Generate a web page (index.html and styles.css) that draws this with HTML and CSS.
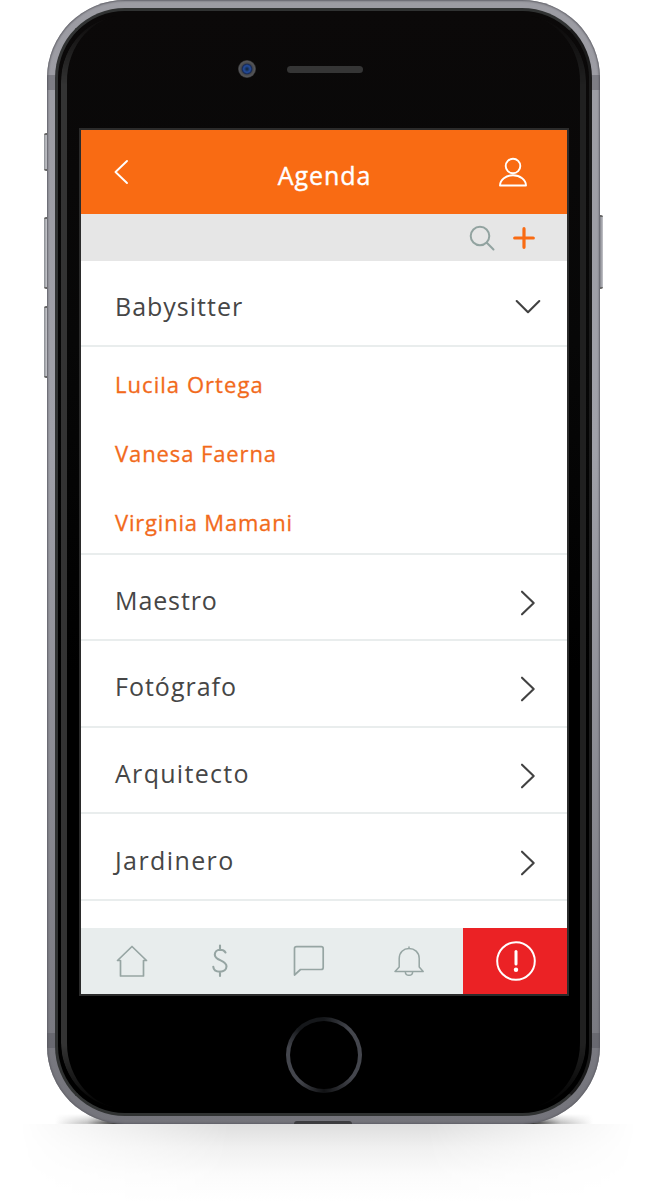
FILE: index.html
```html
<!DOCTYPE html>
<html lang="es">
<head>
<meta charset="utf-8">
<title>Agenda</title>
<link rel="stylesheet" href="styles.css">
</head>
<body>
<main class="stage">
  <div class="floor-shadow"></div>
  <div class="contact-shadow"></div>
  <div class="side-key mute"></div>
  <div class="side-key vol-up"></div>
  <div class="side-key vol-down"></div>
  <div class="side-key power"></div>
  <div class="phone">
    <div class="antenna top"></div>
    <div class="antenna bottom"></div>
    <div class="port"></div>
    <div class="face">
      <div class="rim"></div>
      <div class="earpiece">
        <span class="camera"></span>
        <span class="speaker"></span>
      </div>
      <div class="screen">
        <header class="header">
          <svg class="back" width="16" height="28" viewBox="0 0 16 28"><path d="M14 3 2.500 14 14 25"/></svg>
          <h1 class="title">Agenda</h1>
          <svg class="user" width="30" height="32" viewBox="0 0 30 32"><circle cx="15" cy="10" r="7.3"/><path d="M2 29.500C2 23.500 8 19.300 15 19.300S28 23.500 28 29.500Z"/></svg>
        </header>
        <div class="toolbar">
          <svg class="search" width="26" height="26" viewBox="0 0 26 26"><circle cx="11" cy="11" r="9.300"/><path d="M17.800 17.800 24.500 24.500"/></svg>
          <svg class="plus" width="22" height="22" viewBox="0 0 22 22"><path d="M11 1.700V20.300M1.700 11H20.300"/></svg>
        </div>
        <div class="list">
          <div class="row open"><span class="t1">Babysitter</span><svg class="chev" width="26" height="16" viewBox="0 0 26 16"><path d="M1.700 2 13 13.200 24.300 2"/></svg></div>
          <div class="contacts">
            <span class="contact c1">Lucila Ortega</span>
            <span class="contact c2">Vanesa Faerna</span>
            <span class="contact c3">Virginia Mamani</span>
          </div>
          <div class="row"><span class="t2">Maestro</span><svg class="chev right" width="16" height="26" viewBox="0 0 16 26"><path d="M2 1.700 13.700 13 2 24.300"/></svg></div>
          <div class="row"><span class="t3">Fotógrafo</span><svg class="chev right" width="16" height="26" viewBox="0 0 16 26"><path d="M2 1.700 13.700 13 2 24.300"/></svg></div>
          <div class="row"><span class="t4">Arquitecto</span><svg class="chev right" width="16" height="26" viewBox="0 0 16 26"><path d="M2 1.700 13.700 13 2 24.300"/></svg></div>
          <div class="row"><span class="t5">Jardinero</span><svg class="chev right" width="16" height="26" viewBox="0 0 16 26"><path d="M2 1.700 13.700 13 2 24.300"/></svg></div>
        </div>
        <nav class="tabs">
          <svg class="tab" width="32" height="34" viewBox="0 0 32 34"><path d="M16 2.500 1.500 16.500H4.500V32H27.500V16.500H30.500Z"/></svg>
          <svg class="tab" width="32" height="34" viewBox="0 0 32 34"><path class="thick" d="M16 1.500V6M16 27.500V32M21.500 8.500C20.500 6.700 18.700 5.800 16 5.800 12.800 5.800 10.800 8 10.800 10.700 10.800 17 22.500 15.800 22.500 22.300 22.500 25.500 19.800 27.700 16 27.700 12 27.700 9.500 25.800 9.300 22.700"/></svg>
          <svg class="tab" width="32" height="34" viewBox="0 0 32 34"><path d="M1.500 31V4.500Q1.500 2.700 3.500 2.700H28.200Q30.200 2.700 30.200 4.700V23.500Q30.200 25.500 28.200 25.500H7.500Z"/></svg>
          <svg class="tab" width="32" height="34" viewBox="0 0 32 34"><path class="thin" d="M16 3V4.500M6.200 14.500C6.200 8.300 10.500 4.500 16 4.500S26.200 8.300 26.200 14.500V23L30.200 27.500H2L6.200 23ZM12.300 27.700C12.500 32.500 19.500 32.500 19.700 27.700"/></svg>
          <div class="alert"><svg width="42" height="42" viewBox="0 0 42 42"><circle cx="21" cy="21" r="18.800"/><path d="M21 11.500V24"/><circle class="dot" cx="21" cy="29.800" r="2.200"/></svg></div>
        </nav>
      </div>
      <div class="home"></div>
    </div>
  </div>
</main>
</body>
</html>
```
FILE: styles.css
```css
* { box-sizing: border-box; }
body { margin: 0; background: #fff; font-family: "Open Sans", "Noto Sans", sans-serif; }
.stage { position: relative; width: 656px; height: 1204px; padding-left: 47px; overflow: hidden; }

/* handset */
.phone {
  position: relative; width: 553px; height: 1124px; padding: 8px;
  border-radius: 78px;
  background: linear-gradient(#9c9ca3, #a0a1a9 40%, #74747b);
  box-shadow: inset 0 0 2px 1px #606067;
}
.face {
  position: relative; height: 1108px; padding: 117px 23px 0;
  border-radius: 70px; border: 3px solid #303232; border-right-color: #1b1b1b;
  background: linear-gradient(#0b0909, #070707 30%, #000 60%);
  display: flex; flex-direction: column; align-items: center;
}
.rim {
  position: absolute; inset: 4px 3px; border-radius: 66px;
  border-left: 6px solid #333; border-right: 6px solid #202020;
  -webkit-mask-image: linear-gradient(transparent, #000 70px, #000 1030px, transparent);
  mask-image: linear-gradient(transparent, #000 70px, #000 1030px, transparent);
}
.antenna { position: absolute; left: 0; width: 553px; height: 15px; background: rgba(80, 80, 88, .4); }
.antenna.top { top: 75px; }
.antenna.bottom { top: 1033px; }
.port { position: absolute; left: 247px; top: 1121px; width: 58px; height: 3px; background: #3d3d40; border-radius: 5px 5px 0 0; }
.side-key { position: absolute; background: linear-gradient(90deg, #888b90, #c5c6cb 45%, #45474e); border: 1px solid #666; border-width: 2px 0; border-radius: 2px; }
.mute { left: 44px; top: 133px; width: 5px; height: 38px; }
.vol-up { left: 44px; top: 217px; width: 6px; height: 72px; }
.vol-down { left: 44px; top: 306px; width: 6px; height: 72px; }
.power { left: 598px; top: 215px; width: 5px; height: 74px; background: linear-gradient(90deg, #45474e 30%, #8c8d94 50%, #c5c6cb); }
.floor-shadow {
  position: absolute; left: 0; top: 1124px; width: 656px; height: 78px;
  background: linear-gradient(#dedede, #f0f0f0 30%, #fbfbfb 65%, #fff);
  -webkit-mask-image: linear-gradient(90deg, transparent 3%, #000 35%, #000 65%, transparent 97%);
  mask-image: linear-gradient(90deg, transparent 3%, #000 35%, #000 65%, transparent 97%);
}
.contact-shadow {
  position: absolute; left: 55px; top: 1114px; width: 538px; height: 10px;
  background: linear-gradient(90deg, transparent, rgba(20, 20, 20, .25) 6%, #111 13%, #111 87%, rgba(20, 20, 20, .25) 94%, transparent);
  -webkit-mask-image: linear-gradient(transparent, #000 85%);
  mask-image: linear-gradient(transparent, #000 85%);
}
.earpiece { position: absolute; left: 180px; top: 49px; display: flex; align-items: center; gap: 31px; }
.camera { width: 18px; height: 18px; border-radius: 50%; background: radial-gradient(#123, #244d9e 26%, #182a55 38%, #47484a 46%, #55565a 60%, #333 70%); }
.speaker { width: 76px; height: 7px; border-radius: 4px; background: #353535; }
.home {
  position: relative; width: 76px; height: 76px; margin-top: 21px; border-radius: 50%;
  background: conic-gradient(#15171a, #44464d 12%, #44464d 36%, #101113 50%, #44464d 62%, #44464d 78%, #15171a 88%, #15171a);
}
.home::after { content: ""; position: absolute; inset: 4px; border-radius: 50%; background: #000; }

/* app */
.screen {
  position: relative; flex: none; width: 490px; height: 868px;
  border: 2px solid #2b2b2b;
  background: #fff; display: flex; flex-direction: column; overflow: hidden;
}
.screen svg { fill: none; stroke-linecap: round; stroke-linejoin: round; flex: none; }
.header { height: 84px; flex: none; background: #f96b13; display: flex; align-items: center; justify-content: space-between; padding: 0 39px 0 32px; }
.header svg { stroke: #fff; stroke-width: 1.900; }
.title { margin: 5px 0 0; padding-left: 23px; font-size: 25px; line-height: 34px; font-weight: 500; color: #fff; letter-spacing: .9px; white-space: nowrap; -webkit-text-stroke: .4px; }
.toolbar { height: 47px; flex: none; background: #e6e6e6; display: flex; align-items: center; justify-content: flex-end; gap: 18px; padding: 1px 32px 0 0; }
.search { stroke: #92a3a0; stroke-width: 2; }
.plus { stroke: #f96b13; stroke-width: 3.200; }
.list { flex: 1; min-height: 0; }
.row { height: 86.600px; padding: 8px 31px 0 34.500px; border-bottom: 2px solid #e9eded; display: flex; align-items: center; justify-content: space-between; font-size: 25px; line-height: 34px; color: #464646; }
.row span { margin-top: -2px; }
.row.open { height: 86px; padding: 7px 26px 0 34.500px; }
.chev { stroke: #424242; stroke-width: 2.100; }
.chev.right { margin-top: 4px; }
.contacts { height: 207.500px; padding: 3px 34.500px 0; border-bottom: 2px solid #e9eded; display: flex; flex-direction: column; }
.contact { height: 69px; flex: none; line-height: 68px; font-size: 22px; font-weight: 500; color: #f26a1b; -webkit-text-stroke: .3px; }
.t1 { letter-spacing: 1px; }
.t2 { letter-spacing: .9px; }
.t3 { letter-spacing: 1px; }
.t4 { letter-spacing: 1.300px; }
.t5 { letter-spacing: 1.400px; }
.c1 { letter-spacing: 1.050px; }
.c2 { letter-spacing: .9px; }
.c3 { letter-spacing: .8px; }
.tabs { height: 66px; padding-bottom: 1px; flex: none; background: #e8eded; display: flex; align-items: center; }
.tab { stroke: #96a5a3; stroke-width: 1.700; }
.tab .thick { stroke-width: 2.100; }
.tab .thin { stroke-width: 1.500; }
.tab:nth-child(1) { margin-left: 35px; }
.tab:nth-child(2) { margin-left: 56px; }
.tab:nth-child(3) { margin-left: 57px; }
.tab:nth-child(4) { margin-left: 68px; }
.alert { width: 104px; height: 66px; margin-bottom: -1px; padding: 0 0 1px 2px; margin-left: auto; background: #eb2225; display: flex; align-items: center; justify-content: center; }
.alert svg { stroke: #fff; stroke-width: 2; }
.alert path { stroke-width: 3; }
.alert .dot { fill: #fff; stroke: none; }
```
